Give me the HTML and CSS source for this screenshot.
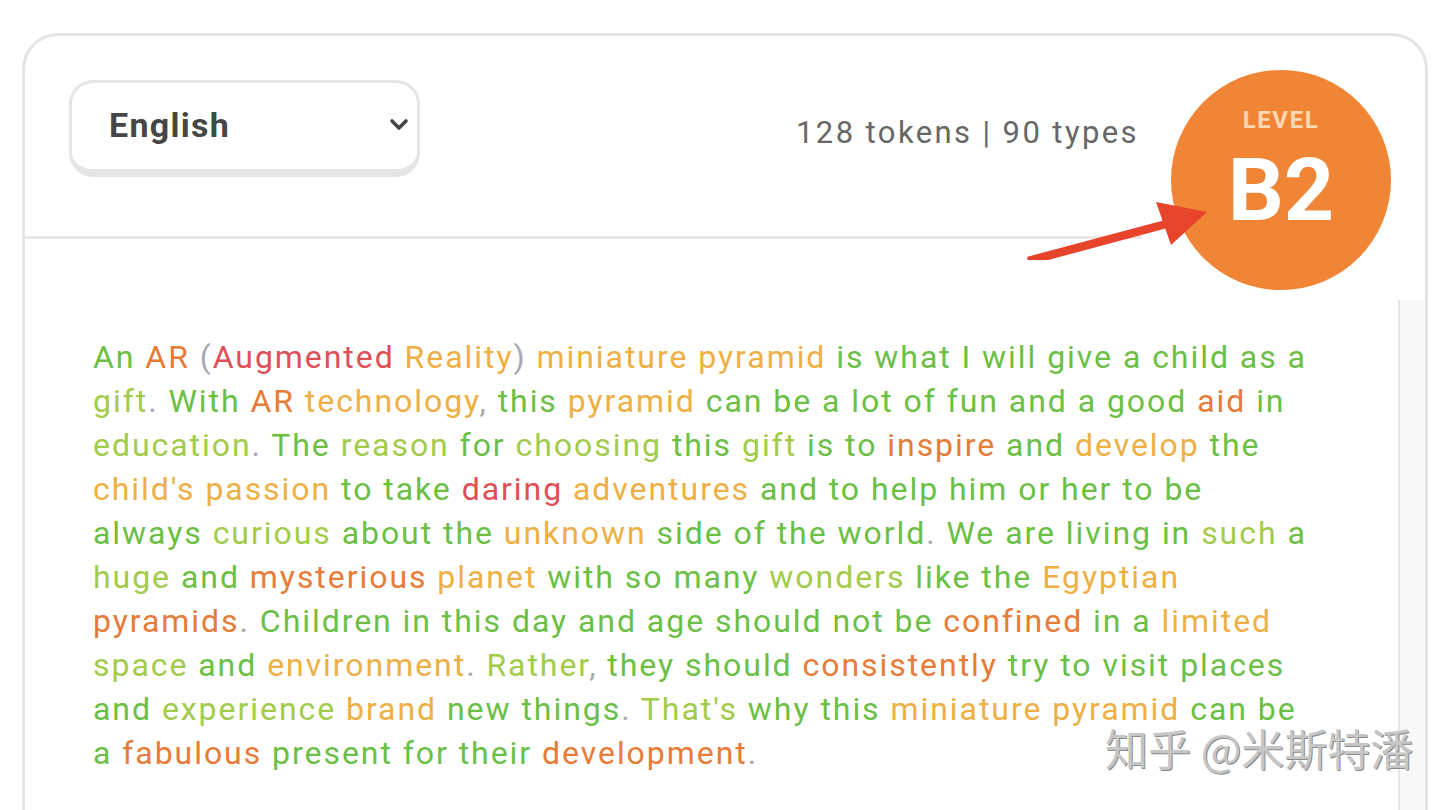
FILE: index.html
```html
<!DOCTYPE html>
<html lang="en">
<head>
<meta charset="utf-8">
<title>Text level</title>
<link rel="stylesheet" href="styles.css">
</head>
<body>
<div class="card">
  <div class="header">
    <div class="header-main">
      <div class="select-wrap">
        <select class="lang-select">
          <option>English</option>
        </select>
        <svg class="chevron" width="20" height="14" viewBox="0 0 20 14"><path d="M3 3 L10 10 L17 3" fill="none" stroke="#454545" stroke-width="3.6" stroke-linecap="round" stroke-linejoin="round"/></svg>
      </div>
      <div class="stats">128 tokens | 90 types</div>
    </div>
    <div class="header-side"></div>
    <div class="badge">
      <div class="badge-label">LEVEL</div>
      <div class="badge-level">B2</div>
    </div>
    <svg class="arrow" width="200" height="70" viewBox="1020 190 200 70">
      <line x1="1028" y1="261" x2="1170" y2="223" stroke="#e8442b" stroke-width="8.5"/>
      <polygon points="1156,202 1207,212 1171,245" fill="#e8442b"/>
    </svg>
  </div>
  <div class="body">
    <p class="text">
      <span class="g">An</span> <span class="o">AR</span> <span class="p">(</span><span class="r">Augmented</span> <span class="y">Reality</span><span class="p">)</span> <span class="y">miniature pyramid</span> <span class="g">is what I will give a child as a</span><br>
      <span class="l">gift</span><span class="p">.</span> <span class="g">With</span> <span class="o">AR</span> <span class="y">technology</span><span class="p">,</span> <span class="g">this</span> <span class="y">pyramid</span> <span class="g">can be a lot of fun and a good</span> <span class="o">aid</span> <span class="g">in</span><br>
      <span class="l">education</span><span class="p">.</span> <span class="g">The</span> <span class="l">reason</span> <span class="g">for</span> <span class="l">choosing</span> <span class="g">this</span> <span class="l">gift</span> <span class="g">is to</span> <span class="o">inspire</span> <span class="g">and</span> <span class="y">develop</span> <span class="g">the</span><br>
      <span class="y">child's passion</span> <span class="g">to take</span> <span class="r">daring</span> <span class="y">adventures</span> <span class="g">and to help him or her to be</span><br>
      <span class="g">always</span> <span class="l">curious</span> <span class="g">about the</span> <span class="y">unknown</span> <span class="g">side of the world</span><span class="p">.</span> <span class="g">We are living in</span> <span class="l">such</span> <span class="g">a</span><br>
      <span class="l">huge</span> <span class="g">and</span> <span class="o">mysterious</span> <span class="y">planet</span> <span class="g">with so many</span> <span class="l">wonders</span> <span class="g">like the</span> <span class="y">Egyptian</span><br>
      <span class="o">pyramids</span><span class="p">.</span> <span class="g">Children in this day and age should not be</span> <span class="o">confined</span> <span class="g">in a</span> <span class="y">limited</span><br>
      <span class="l">space</span> <span class="g">and</span> <span class="y">environment</span><span class="p">.</span> <span class="l">Rather</span><span class="p">,</span> <span class="g">they should</span> <span class="o">consistently</span> <span class="g">try to visit places</span><br>
      <span class="g">and</span> <span class="l">experience</span> <span class="y">brand</span> <span class="g">new things</span><span class="p">.</span> <span class="l">That's</span> <span class="g">why this</span> <span class="y">miniature pyramid</span> <span class="g">can be</span><br>
      <span class="g">a</span> <span class="o">fabulous</span> <span class="g">present for their</span> <span class="o">development</span><span class="p">.</span>
    </p>
    <div class="scroll-track"></div>
  </div>
</div>
<div class="watermark">知乎 @米斯特潘</div>
</body>
</html>
```
FILE: styles.css
```css
html, body {
  margin: 0;
  padding: 0;
  background: #ffffff;
  overflow: hidden;
}
body {
  font-family: Roboto, "Liberation Sans", sans-serif;
  height: 810px;
  position: relative;
}
.card {
  margin: 33px 27px 0 22px;
  border: 3px solid #e4e4e4;
  border-bottom: 0;
  border-radius: 36px 36px 0 0;
  height: 900px;
  position: relative;
  display: flex;
  flex-direction: column;
}
.header {
  display: flex;
  height: 203px;
  flex: none;
  position: relative;
}
.header-main {
  flex: 1;
  display: flex;
  align-items: flex-start;
  justify-content: space-between;
  padding: 44px 3px 0 44px;
  border-bottom: 3px solid #e7e7e7;
}
.header-side {
  width: 283px;
}
.select-wrap {
  position: relative;
  width: 351px;
  height: 97px;
}
.lang-select {
  appearance: none;
  -webkit-appearance: none;
  width: 351px;
  height: 97px;
  box-sizing: border-box;
  border: 3px solid #e5e5e5;
  border-bottom-width: 8px;
  border-radius: 24px;
  background: #ffffff;
  padding: 0 0 3px 37px;
  font-family: Roboto, "Liberation Sans", sans-serif;
  font-weight: 700;
  font-size: 34px;
  letter-spacing: 1.3px;
  color: #464646;
  outline: none;
}
.chevron {
  position: absolute;
  left: 320px;
  top: 38px;
}
.stats {
  margin-top: 34px;
  font-size: 31px;
  color: #676767;
  letter-spacing: 2.4px;
}
.badge {
  position: absolute;
  left: 1146px;
  top: 34px;
  width: 220px;
  height: 220px;
  border-radius: 50%;
  background: #f08536;
  display: flex;
  flex-direction: column;
  align-items: center;
  z-index: 2;
}
.badge-label {
  margin-top: 37px;
  font-size: 24px;
  font-weight: 700;
  color: #fcd7b2;
  letter-spacing: 1.6px;
  line-height: 26px;
}
.badge-level {
  margin-top: 13px;
  font-size: 88px;
  font-weight: 700;
  color: #ffffff;
  line-height: 88px;
}
.arrow {
  position: absolute;
  left: 995px;
  top: 154px;
  z-index: 3;
}
.body {
  display: flex;
  flex: 1;
}
.text {
  flex: 1;
  margin: 0;
  padding: 96px 0 0 68px;
  font-size: 32px;
  letter-spacing: 1.95px;
  line-height: 44px;
  color: #6bbf45;
}
.g { color: #6bbf45; }
.l { color: #a2cb4b; }
.y { color: #eeaf44; }
.o { color: #e77b38; }
.r { color: #df4f58; }
.p { color: #a8a8b0; }
.scroll-track {
  width: 25px;
  margin-top: 61px;
  background: #f8f8f8;
  border-left: 2px solid #e6e6e6;
}
.watermark {
  position: absolute;
  left: 1105px;
  top: 716px;
  font-family: "Noto Sans CJK SC", sans-serif;
  font-size: 43px;
  color: #c6c6c6;
  text-shadow: 1px 1px 0 #8a8a8a;
  white-space: nowrap;
  z-index: 5;
}
```
